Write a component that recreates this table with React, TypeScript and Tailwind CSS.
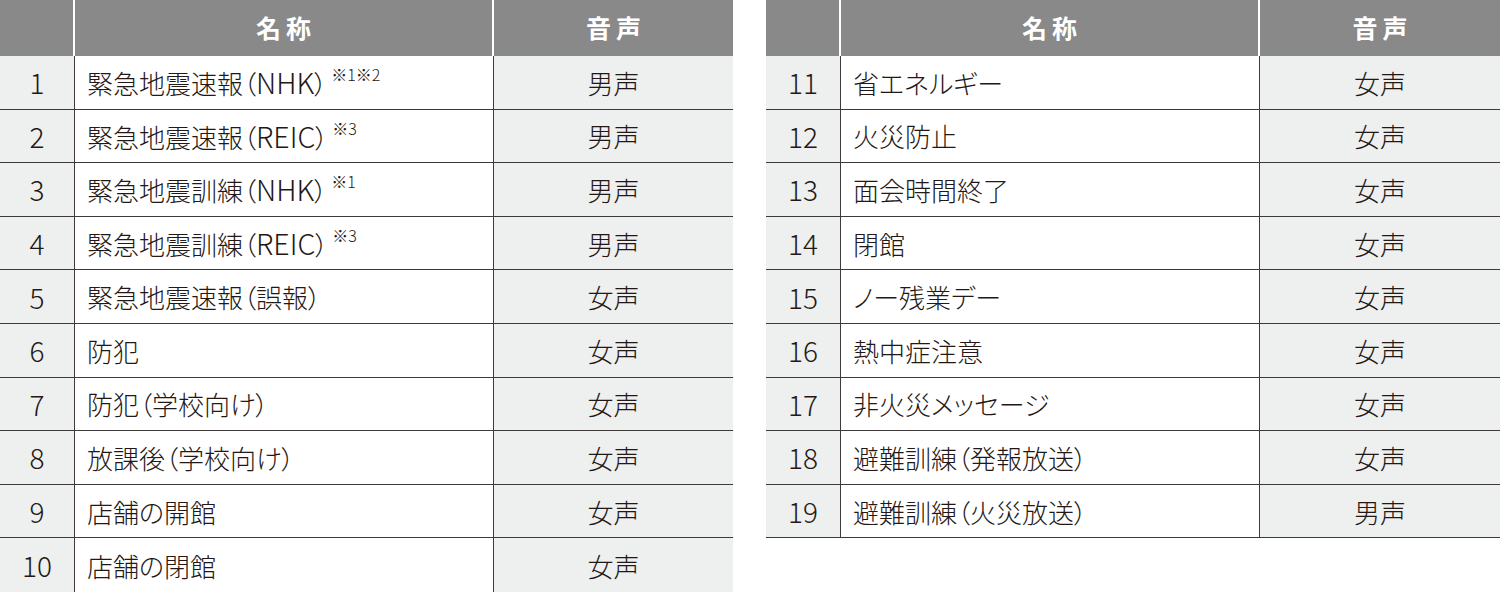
import React from "react";

type Row = { n: number; name: string; note?: string; voice: string };

const left: Row[] = [
  { n: 1, name: "緊急地震速報（NHK）", note: "※1※2", voice: "男声" },
  { n: 2, name: "緊急地震速報（REIC）", note: "※3", voice: "男声" },
  { n: 3, name: "緊急地震訓練（NHK）", note: "※1", voice: "男声" },
  { n: 4, name: "緊急地震訓練（REIC）", note: "※3", voice: "男声" },
  { n: 5, name: "緊急地震速報（誤報）", voice: "女声" },
  { n: 6, name: "防犯", voice: "女声" },
  { n: 7, name: "防犯（学校向け）", voice: "女声" },
  { n: 8, name: "放課後（学校向け）", voice: "女声" },
  { n: 9, name: "店舗の開館", voice: "女声" },
  { n: 10, name: "店舗の閉館", voice: "女声" },
];

const right: Row[] = [
  { n: 11, name: "省エネルギー", voice: "女声" },
  { n: 12, name: "火災防止", voice: "女声" },
  { n: 13, name: "面会時間終了", voice: "女声" },
  { n: 14, name: "閉館", voice: "女声" },
  { n: 15, name: "ノー残業デー", voice: "女声" },
  { n: 16, name: "熱中症注意", voice: "女声" },
  { n: 17, name: "非火災メッセージ", voice: "女声" },
  { n: 18, name: "避難訓練（発報放送）", voice: "女声" },
  { n: 19, name: "避難訓練（火災放送）", voice: "男声" },
];

function Name({ text }: { text: string }) {
  const parts = text.split(/([A-Za-z]+)/);
  return (
    <span>
      {parts.map((p, i) =>
        /^[A-Za-z]+$/.test(p) ? (
          <span key={i} className="text-[28.5px]">
            {p}
          </span>
        ) : (
          <span key={i}>{p}</span>
        )
      )}
    </span>
  );
}

function Table({ rows, lastWidth, lastNoBorder }: { rows: Row[]; lastWidth: string; lastNoBorder?: boolean }) {
  return (
    <div className="flex flex-col">
      <div className="flex h-[56px] bg-[#898989] text-white font-bold text-[25px]">
        <div className="w-[75px] border-r-2 border-white" />
        <div className="w-[419px] border-r-2 border-white flex items-center justify-center tracking-[0.2em] pl-[5px]">
          名称
        </div>
        <div className={`${lastWidth} flex items-center justify-center tracking-[0.2em] pl-[5px]`}>音声</div>
      </div>
      {rows.map((r, i) => {
        const noB = lastNoBorder && i === rows.length - 1;
        return (
          <div
            key={r.n}
            className={
              noB
                ? "flex h-[53.6px] text-[#231815]"
                : "flex h-[53.6px] text-[#231815] border-b-[1.5px] border-[#3e3a39]"
            }
          >
            <div className="w-[75px] bg-[#eeefef] border-r-[1.5px] border-[#3e3a39] flex items-center justify-center text-[28px] font-light">
              {r.n}
            </div>
            <div className="w-[419px] border-r-[1.5px] border-[#3e3a39] flex items-center pl-[12px] text-[26px] font-light [font-feature-settings:'palt'] whitespace-nowrap">
              <Name text={r.name} />
              {r.note && (
                <span className="ml-[4px] text-[16px] relative -top-[8px] [font-feature-settings:normal]">{r.note}</span>
              )}
            </div>
            <div className={`${lastWidth} bg-[#eeefef] flex items-center justify-center text-[26px] font-light`}>
              {r.voice}
            </div>
          </div>
        );
      })}
    </div>
  );
}

export default function App() {
  return (
    <div
      className="w-[1500px] h-[592px] overflow-hidden bg-white flex gap-[33px]"
      style={{ fontFamily: '"Noto Sans CJK JP", "Noto Sans", sans-serif' }}
    >
      <div className="w-[733px]">
        <Table rows={left} lastWidth="w-[239px]" lastNoBorder />
      </div>
      <div className="w-[734px]">
        <Table rows={right} lastWidth="w-[240px]" />
      </div>
    </div>
  );
}
